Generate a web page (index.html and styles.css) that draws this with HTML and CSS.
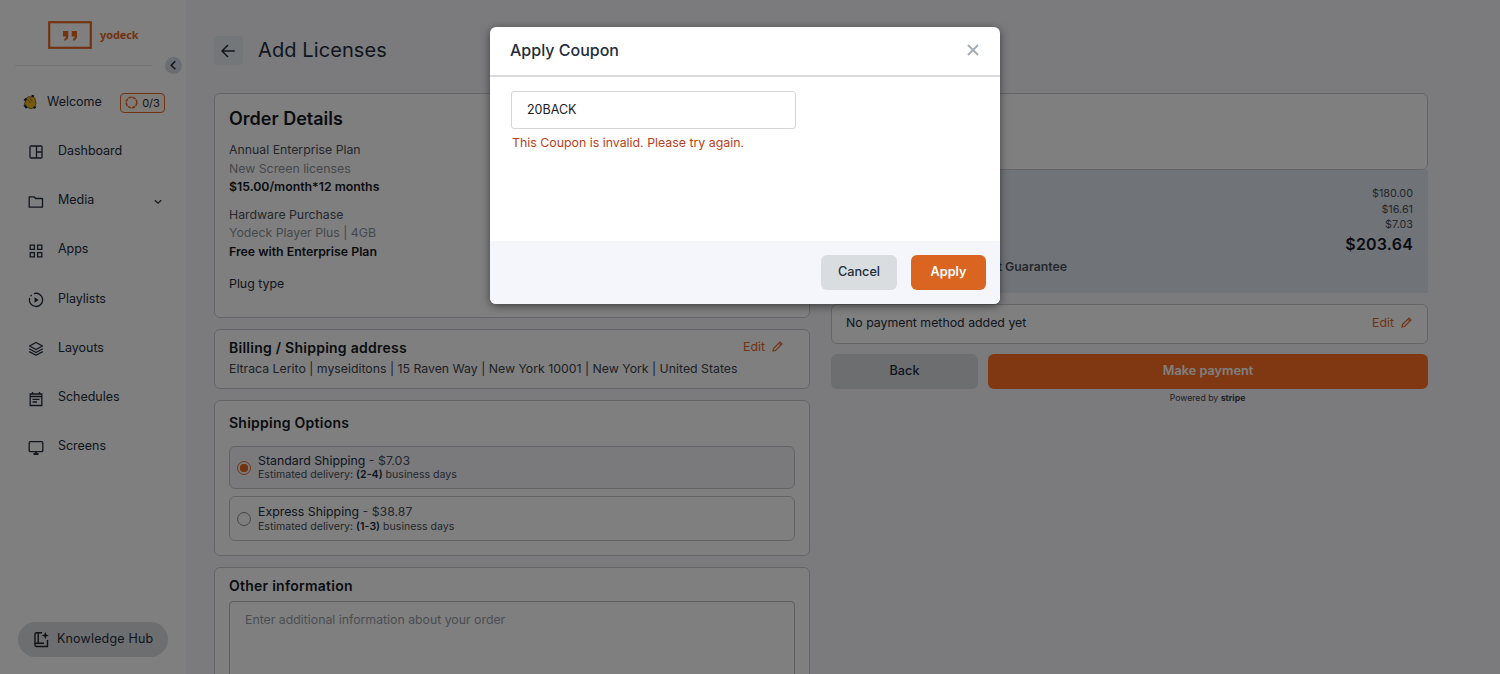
FILE: index.html
```html
<!DOCTYPE html>
<html lang="en">
<head>
<meta charset="utf-8">
<title>Add Licenses</title>
<link rel="stylesheet" href="styles.css">
</head>
<body>
<div class="app">
  <aside class="sidebar">
    <div class="logo">
      <svg width="44" height="28" viewBox="0 0 44 28"><rect x="1.2" y="1.2" width="41.6" height="25.6" fill="none" stroke="#e56722" stroke-width="2.2"/><path d="M15 10h5.300v5.200c0 2.600-1.500 4.200-4 4.600v-2c1.100-.3 1.600-1.100 1.700-2.300h-3zM23.700 10h5.300v5.200c0 2.600-1.500 4.200-4 4.600v-2c1.100-.3 1.600-1.100 1.700-2.300h-3z" fill="#e56722"/></svg>
      <span class="logo-name">yodeck</span>
    </div>
    <div class="divider"></div>
    <button class="collapse"><svg width="17" height="17" viewBox="0 0 17 17" fill="none" stroke="#222c3c" stroke-width="1.5"><path d="M10.300 4.200 6.200 8.200l4.100 4"/></svg></button>
    <nav class="nav">
      <a class="item welcome">
        <svg width="15" height="16" viewBox="0 0 15 16"><path d="M3.500 4 6 2.500l2 .5 2.500-.5 1.500 2 1 5-1.500 4-3.500 1.300-4-1.500L1.500 10z" fill="#f0b41a" stroke="#574318" stroke-width=".7"/><path d="m4.500 5 3 4M7 4l2.500 4" stroke="#8b6713" stroke-width=".8"/><path d="M1.200 6.500 3.500 4.500M8.500 1.800l2.500.5M1.200 11 3.800 14M10.500 14l2.300-1.200" stroke="#153444" stroke-width="2"/></svg>
        <span class="label">Welcome</span>
        <span class="progress"><svg width="13" height="13" viewBox="0 0 13 13"><circle cx="6.500" cy="6.500" r="5.300" fill="none" stroke="#e56722" stroke-width="1.500" stroke-dasharray="3.500 .7"/></svg>0/3</span>
      </a>
      <a class="item"><svg class="ico" viewBox="0 0 16 16"><rect x="2" y="2" width="12" height="12" rx="1"/><path d="M8.500 2v12M8.500 8H14"/></svg><span class="label">Dashboard</span></a>
      <a class="item"><svg class="ico" viewBox="0 0 16 16"><path d="M1.200 2.800h4.800l1.700 1.700h6.800v8.700H1.200z" stroke-linejoin="round"/></svg><span class="label media">Media</span><svg class="chev" width="8" height="6" viewBox="0 0 8 6"><path d="m.8 1.300 3.200 3 3.200-3"/></svg></a>
      <a class="item"><svg class="ico" viewBox="0 0 16 16"><path d="M2.200 2.200h4.200v4.200H2.200zM9.600 2.200h4.200v4.200H9.600zM2.200 9.600h4.200v4.200H2.200zM9.600 9.600h4.200v4.200H9.600z"/></svg><span class="label">Apps</span></a>
      <a class="item"><svg class="ico" viewBox="0 0 16 16"><path d="M6 1.600A6.600 6.600 0 1 1 1.700 6M2.500 4.200l1.200-1.300"/><path d="M6.500 5.300v5.400L10.700 8z" fill="#222c3c" stroke="none"/></svg><span class="label">Playlists</span></a>
      <a class="item"><svg class="ico" viewBox="0 0 16 16" stroke-linejoin="round"><path d="M8 1.500 14.500 5 8 8.500 1.500 5zM1.200 7.800 8 11.500l6.800-3.700M1.200 10.600 8 14.300l6.800-3.700"/></svg><span class="label">Layouts</span></a>
      <a class="item"><svg class="ico" viewBox="0 0 16 16"><path d="M2.200 3h11.600v11.500H2.200zM2 5.500h12M4.500 1v2M11.500 1v2M4.500 8.300h7M4.500 11h4.500"/></svg><span class="label">Schedules</span></a>
      <a class="item"><svg class="ico" viewBox="0 0 16 16"><rect x="1.200" y="1.700" width="13.600" height="10" rx="1"/><path d="M5.500 14h5M8 11.700v2" stroke-width="1.800"/></svg><span class="label">Screens</span></a>
    </nav>
    <button class="hub"><svg width="17" height="17" viewBox="0 0 17 17" fill="none" stroke="#1f2429" stroke-width="1.400"><path d="M9 1.700H3.600C2.500 1.700 2 2.300 2 3.300v10.900c0 .8.600 1.300 1.400 1.300H14.500V9M5.200 1.700v10.600M2 13.600c0-.8.600-1.300 1.400-1.300H11"/><path d="m12.300.9 1 2.500 2.500 1-2.500 1-1 2.500-1-2.500-2.500-1 2.500-1z" fill="#1f2429" stroke="none"/></svg><span>Knowledge Hub</span></button>
  </aside>

  <main class="main">
    <header class="head">
      <button class="back-arrow"><svg width="15" height="14" viewBox="0 0 15 14" fill="none" stroke="#222c3c" stroke-width="1.500"><path d="M7 1 1 7l6 6M1 7h12.800"/></svg></button>
      <h1>Add Licenses</h1>
    </header>
    <div class="columns">
      <section class="col">
        <div class="card order">
          <h2>Order Details</h2>
          <div class="group"><p>Annual Enterprise Plan</p><p class="muted">New Screen licenses</p><p class="strong">$15.00/month*12 months</p></div>
          <div class="group"><p>Hardware Purchase</p><p class="muted">Yodeck Player Plus | 4GB</p><p class="strong free">Free with Enterprise Plan</p></div>
          <p class="plug">Plug type</p>
        </div>
        <div class="card billing">
          <div class="row"><h3>Billing / Shipping address</h3><a class="edit">Edit <svg width="11" height="11" viewBox="0 0 11 11"><path d="M1 10l.5-2.500L8 1l2 2-6.500 6.500zM6.900 2.100l2 2"/></svg></a></div>
          <p class="address">Eltraca Lerito | myseiditons | 15 Raven Way | New York 10001 | New York | United States</p>
        </div>
        <div class="card shipping">
          <h3>Shipping Options</h3>
          <div class="option selected"><span class="radio"></span><div><p class="name">Standard Shipping <span>- $7.03</span></p><p class="eta">Estimated delivery: <b>(2-4)</b> business days</p></div></div>
          <div class="option express"><span class="radio"></span><div><p class="name">Express Shipping <span>- $38.87</span></p><p class="eta">Estimated delivery: <b>(1-3)</b> business days</p></div></div>
        </div>
        <div class="card other">
          <h3>Other information</h3>
          <div class="textarea">Enter additional information about your order</div>
        </div>
      </section>
      <section class="col">
        <div class="card coupon"></div>
        <div class="summary">
          <p>$180.00</p><p>$16.61</p><p>$7.03</p><p class="total">$203.64</p>
          <p class="guarantee">t Guarantee</p>
        </div>
        <div class="card payment"><span>No payment method added yet</span><a class="edit">Edit <svg width="11" height="11" viewBox="0 0 11 11"><path d="M1 10l.5-2.500L8 1l2 2-6.500 6.500zM6.900 2.100l2 2"/></svg></a></div>
        <div class="actions"><button class="btn gray">Back</button><button class="btn pay">Make payment</button></div>
        <p class="powered">Powered by <b>stripe</b></p>
      </section>
    </div>
  </main>
</div>

<div class="overlay">
  <div class="modal">
    <div class="modal-head"><span>Apply Coupon</span><svg width="12" height="12" viewBox="0 0 12 12"><path d="m1 1 10 10M11 1 1 11"/></svg></div>
    <div class="modal-body"><div class="input">20BACK</div><p class="error">This Coupon is invalid. Please try again.</p></div>
    <div class="modal-foot"><button class="btn cancel">Cancel</button><button class="btn apply">Apply</button></div>
  </div>
</div>
</body>
</html>
```
FILE: styles.css
```css
* { box-sizing: border-box; }
body { margin: 0; height: 674px; overflow: hidden; background: #f6f6fa; font-family: Inter, "Liberation Sans", sans-serif; font-size: 12.350px; color: #222c3c; }
h1, h2, h3, p { margin: 0; }
button { border: 0; padding: 0; font: inherit; color: inherit; }
.app { display: flex; height: 674px; overflow: hidden; }

.sidebar { position: relative; width: 186px; flex: none; background: #fff; display: flex; flex-direction: column; }
.logo { display: flex; align-items: center; gap: 8px; padding: 21px 0 0 48px; height: 49px; }
.logo-name { font: 700 11px/16px "Noto Sans", sans-serif; color: #e56722; letter-spacing: -.1px; }
.divider { height: 1px; margin: 16px 34px 0 15px; background: #e2e5e8; }
.collapse { position: absolute; left: 165px; top: 57px; width: 17px; height: 17px; border-radius: 50%; background: #d5dbe2; }
.collapse svg { display: block; }
.nav { display: flex; flex-direction: column; padding-top: 11.500px; }
.item { display: flex; align-items: center; height: 49.250px; padding-left: 28px; }
.item .label { margin-left: 14px; font-size: 12.500px; letter-spacing: -.03px; line-height: 18px; padding-bottom: 1px; }
.item .media { width: 37px; }
.ico { width: 16px; height: 16px; margin-top: 2px; fill: none; stroke: #222c3c; stroke-width: 1.300; }
.chev { margin: 3px 0 0 59px; fill: none; stroke: #222c3c; stroke-width: 1.200; }
.welcome { padding-left: 23px; }
.welcome .label { margin-left: 9px; width: 55px; }
.progress { display: flex; align-items: center; justify-content: center; gap: 4px; width: 45px; height: 20px; margin: 1px 0 0 18px; border: 1px solid #e56722; border-radius: 4px; background: #fff6ee; font-size: 11px; }
.hub { display: flex; align-items: center; gap: 7px; width: 150px; height: 35px; margin: auto 0 17px 18px; padding-left: 15px; border-radius: 18px; background: #dadde1; font-size: 12.500px; letter-spacing: .17px; }
.hub span { padding-bottom: 2px; }

.main { flex: 1; padding: 36px 72px 0 28px; }
.head { display: flex; align-items: center; height: 29px; }
.back-arrow { display: grid; place-items: center; width: 29px; height: 29px; border-radius: 4px; background: #e6eef4; }
h1 { margin: -2px 0 0 15px; font-size: 20px; font-weight: 400; letter-spacing: .1px; }
.columns { display: grid; grid-template-columns: 596px 597px; gap: 21px; padding-top: 28px; }
.card { background: #fff; border: 1px solid #c9cbd2; border-radius: 6px; padding: 0 14px; }
h2 { font-size: 18px; line-height: 24px; font-weight: 600; color: #14181f; }
h3 { font-size: 14px; line-height: 20px; font-weight: 600; letter-spacing: .25px; color: #14181f; }
.order { height: 225px; padding-top: 13px; }
.order p { line-height: 18.500px; }
.group { margin-top: 9px; color: #4a4f58; font-size: 12.300px; }
.group .muted { color: #8d9299; }
.group .strong { font-weight: 600; color: #14181f; }
h2 + .group { margin-top: 10px; }
.plug { margin-top: 13.500px; }
.billing { height: 60px; margin-top: 11px; padding-top: 8px; }
.row { display: flex; justify-content: space-between; }
.edit { display: flex; align-items: center; gap: 7px; color: #e56722; height: 17px; }
.edit svg { fill: none; stroke: #e56722; stroke-width: 1.200; }
.row .edit { margin-right: 12px; }
.address { font-size: 12.300px; line-height: 20px; margin-top: 1px; color: #3d434d; }
.shipping { height: 156px; margin-top: 11px; padding-top: 12px; }
.option { display: flex; align-items: center; gap: 7px; height: 43px; margin-top: 13px; padding-left: 7px; border: 1px solid #c4c7cd; border-radius: 6px; }
.option > div { padding-bottom: 1px; }
.selected { background: #f4f4f9; }
.express { height: 45px; margin-top: 7px; }
.radio { width: 14px; height: 14px; border: 1px solid #888e96; border-radius: 50%; }
.selected .radio { border-color: #e56722; background: radial-gradient(circle, #e56722 0 4px, transparent 4.500px); }
.name { line-height: 15px; }
.name span { color: #4a4f58; }
.eta { font-size: 10.600px; line-height: 13px; color: #4a4f58; }
.eta b { font-weight: 600; color: #222c3c; }
.express .name { line-height: 16px; }
.other { height: 180px; margin-top: 11px; padding-top: 8px; }
.textarea { height: 140px; margin-top: 5px; padding: 9px 15px; border: 1px solid #b9bdc3; border-radius: 4px; line-height: 18px; font-size: 12.300px; color: #979ca3; }

.coupon { height: 77px; border-color: #cbc7d1; }
.summary { height: 123px; padding: 16px 15px 0; background: #e1e8f0; text-align: right; font-size: 10.800px; line-height: 15.700px; color: #4a4f58; }
.summary .total { font-size: 16px; line-height: 23px; font-weight: 600; color: #14181f; letter-spacing: .2px; }
.summary .guarantee { width: 221px; font-size: 12.300px; line-height: 22px; font-weight: 600; white-space: nowrap; }
.payment { display: flex; align-items: center; justify-content: space-between; height: 40px; margin-top: 11px; padding: 0 15px 4px; }
.payment > span { margin-left: -1px; }
.actions { display: grid; grid-template-columns: 147px 440px; gap: 10px; margin-top: 10px; }
.btn { height: 35px; padding-bottom: 2px; border-radius: 6px; font-size: 12.700px; font-weight: 500; }
.gray { background: #d9dde1; }
.pay { background: #ff7024; color: #fff; font-weight: 600; }
.powered { margin-top: 2px; padding-left: 156px; text-align: center; font-size: 8.700px; line-height: 15px; color: #3d434d; }

.overlay { position: absolute; inset: 0; background: rgba(0, 0, 0, .5); display: flex; justify-content: center; align-items: flex-start; padding: 27px 10px 0 0; }
.modal { width: 510px; height: 277px; border-radius: 6px; background: #fff; overflow: hidden; box-shadow: 0 2px 9px rgba(0, 0, 0, .5); display: flex; flex-direction: column; }
.modal-head { display: flex; align-items: center; justify-content: space-between; height: 50px; padding: 0 21px 3px 20px; border-bottom: 2px solid #d8dadc; font-size: 16px; font-weight: 500; }
.modal-head svg { stroke: #a2adb5; stroke-width: 2; fill: none; }
.modal-body { flex: 1; padding: 14px 21px; }
.input { width: 285px; height: 38px; padding-left: 15px; border: 1px solid #d2d6db; border-radius: 3px; font-size: 12.500px; line-height: 36px; color: #1b2028; }
.error { margin-top: 5px; padding-left: 1px; line-height: 18px; color: #b83e20; }
.modal-foot { display: flex; justify-content: flex-end; gap: 14px; height: 63px; padding: 14px; background: #f5f6fb; }
.cancel { width: 76px; background: #d9dde0; }
.apply { width: 75px; background: #da6520; color: #fff; font-weight: 600; }
```
